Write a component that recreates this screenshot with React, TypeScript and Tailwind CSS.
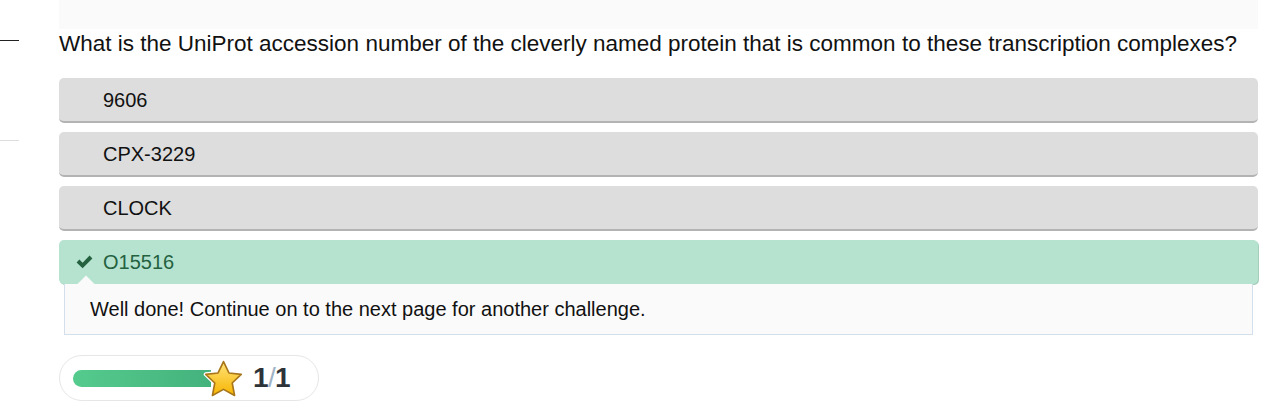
const options = ["9606", "CPX-3229", "CLOCK"]

const CheckMark = () => (
  <svg width="17" height="14" viewBox="0 0 17 14" className="mr-[10px] shrink-0">
    <path d="M0.6 7.4 L3.4 4.6 L6.6 7.8 L13.6 0.6 L16.4 3.4 L6.6 13.2 Z" fill="#24613f" />
  </svg>
)

const Star = () => (
  <svg width="41" height="40" viewBox="0 0 40 39" className="shrink-0">
    <defs>
      <linearGradient id="starFill" x1="0" y1="0" x2="0" y2="1">
        <stop offset="0%" stopColor="#ffe27a" />
        <stop offset="100%" stopColor="#f7b500" />
      </linearGradient>
    </defs>
    <path
      d="M20 2.5 L25.3 13.6 L37.3 15 L28.5 23.4 L30.8 35.6 L20 29.6 L9.2 35.6 L11.5 23.4 L2.7 15 L14.7 13.6 Z"
      fill="url(#starFill)"
      stroke="#ffffff"
      strokeWidth="4"
      strokeLinejoin="round"
    />
    <path
      d="M20 2.5 L25.3 13.6 L37.3 15 L28.5 23.4 L30.8 35.6 L20 29.6 L9.2 35.6 L11.5 23.4 L2.7 15 L14.7 13.6 Z"
      fill="url(#starFill)"
      stroke="#a8761a"
      strokeWidth="1.6"
      strokeLinejoin="round"
    />
  </svg>
)

const App = () => {
  return (
    <div className="w-[1278px] h-[401px] bg-white overflow-hidden font-['Liberation_Sans',Arial,sans-serif] flex">
      <div className="w-[59px] shrink-0 flex flex-col">
        <div className="h-[40px]" />
        <div className="w-[19px] h-px bg-[#222]" />
        <div className="h-[99px]" />
        <div className="w-[19px] h-px bg-[#ddd]" />
      </div>

      <div className="w-[1199px] flex flex-col">
        <div className="h-[32px] bg-[#fafafa]" />
        <h2 className="text-[22.5px] leading-[28px] text-[#111] mt-[1px] mb-[20px] whitespace-nowrap">
          What is the UniProt accession number of the cleverly named protein that is common to these transcription complexes?
        </h2>

        <ul className="flex flex-col gap-[9px]">
          {options.map((o) => (
            <li
              key={o}
              className="h-[45px] rounded-[5px] bg-[#dddddd] border-b-2 border-[#b3b3b3] pl-[44px] flex items-center text-[20px] text-[#111]"
            >
              {o}
            </li>
          ))}
          <li className="flex flex-col">
            <div className="h-[44px] rounded-[5px] bg-[#b5e3cf] shadow-[1px_1px_0_#a3cfbb] pl-[17px] flex items-center text-[20px] text-[#24613f]">
              <CheckMark />
              O15516
            </div>
            <div className="relative mx-[5px] h-[51px] bg-[#fafafa] border border-t-0 border-[#d3dfea] pl-[25px] flex items-center text-[20px] text-[#111]">
              <span className="absolute -top-[6px] left-[15px] w-[12px] h-[12px] rotate-45 bg-[#fafafa]" />
              <span className="relative">Well done! Continue on to the next page for another challenge.</span>
            </div>
          </li>
        </ul>

        <div className="mt-[20px] w-[260px] h-[50px] rounded-full border border-[#e6e6e6] flex items-center pl-[13px]">
          <div className="w-[138px] h-[17px] rounded-l-full bg-gradient-to-r from-[#55cb8d] to-[#44b27d]" />
          <div className="-ml-[8px] mt-[2px]">
            <Star />
          </div>
          <span className="ml-[9px] text-[28px] font-bold text-[#2d3338] tracking-tight">
            1<span className="text-[#9fb3c6] font-normal">/</span>1
          </span>
        </div>
      </div>
    </div>
  )
}

export default App
